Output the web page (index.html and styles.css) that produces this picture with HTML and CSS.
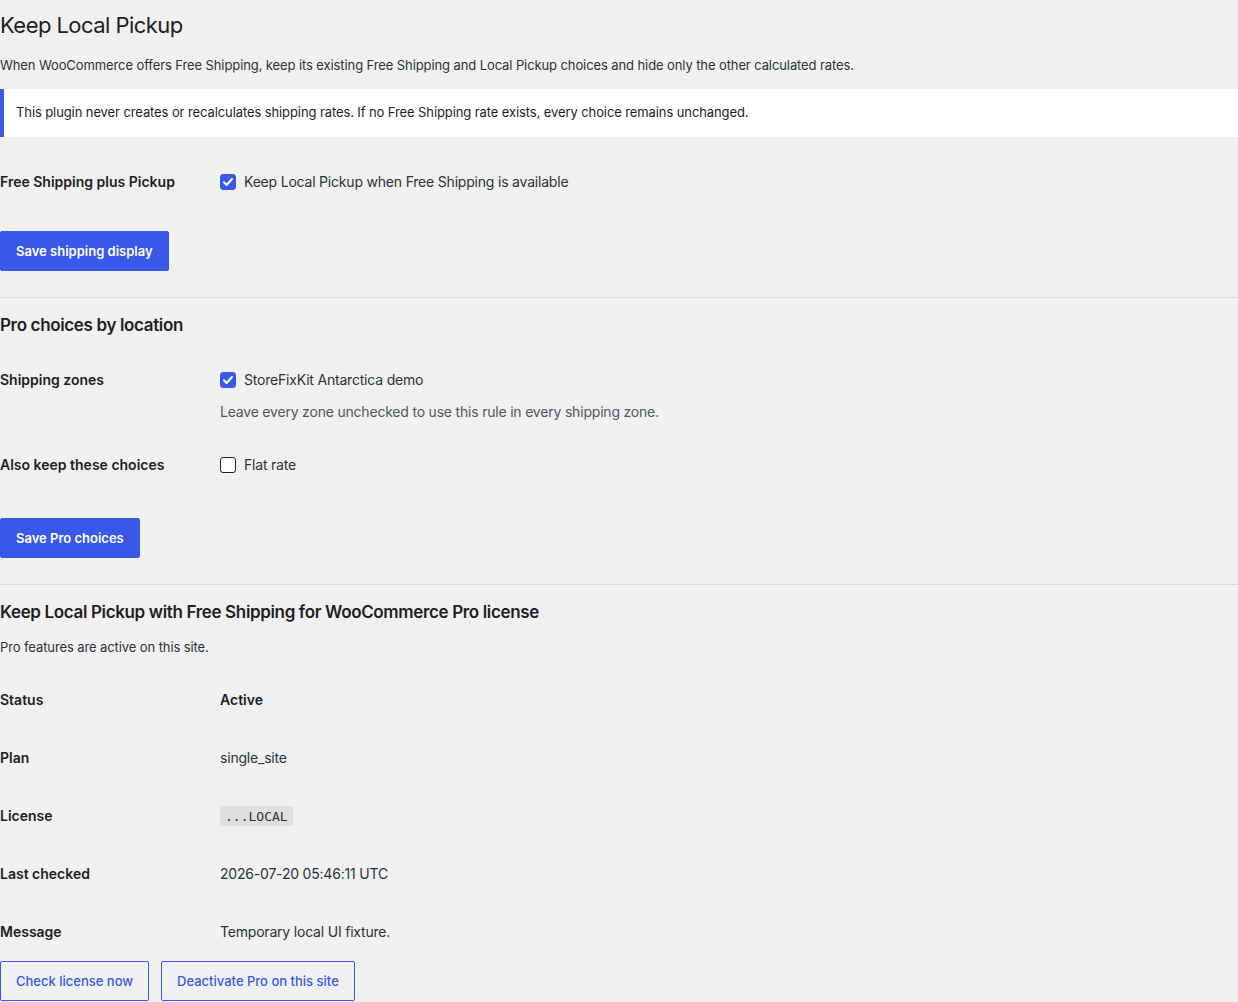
FILE: index.html
```html
<!DOCTYPE html>
<html lang="en">
<head>
<meta charset="utf-8">
<title>Keep Local Pickup</title>
<link rel="stylesheet" href="styles.css">
</head>
<body>
<div class="wrap">
  <h1 class="title">Keep Local Pickup</h1>
  <p class="lead">When WooCommerce offers Free Shipping, keep its existing Free Shipping and Local Pickup choices and hide only the other calculated rates.</p>
  <div class="notice"><p>This plugin never creates or recalculates shipping rates. If no Free Shipping rate exists, every choice remains unchanged.</p></div>

  <form class="section">
    <table class="form-table first">
      <tr>
        <th>Free Shipping plus Pickup</th>
        <td>
          <label class="check">
            <span class="cb on"><svg viewBox="0 0 16 16" width="16" height="16"><path d="M4 8.3l2.6 2.7L12 5" fill="none" stroke="#fff" stroke-width="2" stroke-linecap="round" stroke-linejoin="round"/></svg></span>
            <span>Keep Local Pickup when Free Shipping is available</span>
          </label>
        </td>
      </tr>
    </table>
    <div class="submit"><button type="button" class="btn primary">Save shipping display</button></div>
  </form>

  <hr class="sep">

  <form class="section">
    <h2 class="heading">Pro choices by location</h2>
    <table class="form-table">
      <tr>
        <th>Shipping zones</th>
        <td class="tight">
          <label class="check">
            <span class="cb on"><svg viewBox="0 0 16 16" width="16" height="16"><path d="M4 8.3l2.6 2.7L12 5" fill="none" stroke="#fff" stroke-width="2" stroke-linecap="round" stroke-linejoin="round"/></svg></span>
            <span>StoreFixKit Antarctica demo</span>
          </label>
          <p class="description">Leave every zone unchecked to use this rule in every shipping zone.</p>
        </td>
      </tr>
      <tr>
        <th>Also keep these choices</th>
        <td>
          <label class="check">
            <span class="cb"></span>
            <span>Flat rate</span>
          </label>
        </td>
      </tr>
    </table>
    <div class="submit wide"><button type="button" class="btn primary">Save Pro choices</button></div>
  </form>

  <hr class="sep">

  <section class="section">
    <h2 class="heading">Keep Local Pickup with Free Shipping for WooCommerce Pro license</h2>
    <p class="intro">Pro features are active on this site.</p>
    <table class="form-table info">
      <tr><th>Status</th><td><strong>Active</strong></td></tr>
      <tr><th>Plan</th><td>single_site</td></tr>
      <tr><th>License</th><td><code>...LOCAL</code></td></tr>
      <tr><th>Last checked</th><td>2026-07-20 05:46:11 UTC</td></tr>
      <tr><th>Message</th><td>Temporary local UI fixture.</td></tr>
    </table>
    <div class="actions">
      <button type="button" class="btn secondary">Check license now</button>
      <button type="button" class="btn secondary">Deactivate Pro on this site</button>
    </div>
  </section>
</div>
</body>
</html>
```

FILE: styles.css
```css
html, body {
  margin: 0;
  padding: 0;
  background: #f0f0f1;
}
body {
  font-family: Inter, "Noto Sans", "Liberation Sans", sans-serif;
  color: #1e1e1e;
  font-size: 13px;
  line-height: 1.4;
}
.wrap {
  width: 1238px;
}
.title {
  margin: 0;
  padding: 11px 0 3px;
  font-size: 22px;
  font-weight: 400;
  line-height: 1.3;
  color: #1e1e1e;
  letter-spacing: -0.55px;
}
.lead {
  margin: 13px 0 14px;
  font-size: 13px;
  line-height: 1.5;
  color: #2c3338;
  letter-spacing: -0.1px;
}
.notice {
  background: #fff;
  border-left: 4px solid #3858e9;
  padding: 1px 12px;
}
.notice p {
  margin: 13.25px 0;
  font-size: 13px;
  line-height: 1.5;
  color: #1e1e1e;
  letter-spacing: -0.1px;
}
.form-table {
  border-collapse: collapse;
  border-spacing: 0;
  width: 100%;
  font-size: 14px;
  line-height: 1.3;
}
.form-table.first {
  margin-top: 16px;
}
.form-table th {
  width: 200px;
  padding: 20px 10px 20px 0;
  text-align: left;
  vertical-align: top;
  font-weight: 600;
  color: #1e1e1e;
}
.form-table td {
  padding: 20px 10px 15px;
  vertical-align: top;
  color: #2c3338;
  letter-spacing: -0.2px;
}
.form-table td.tight {
  padding-bottom: 15px;
}
.form-table strong {
  font-weight: 600;
  color: #1e1e1e;
  letter-spacing: 0;
}
.check {
  display: flex;
  align-items: center;
  gap: 8px;
}
.cb {
  box-sizing: border-box;
  width: 16px;
  height: 16px;
  border: 1px solid #1e1e1e;
  border-radius: 3px;
  background: #fff;
  display: inline-flex;
  flex: none;
}
.cb.on {
  background: #3858e9;
  border-color: #3858e9;
}
.cb svg {
  display: block;
  margin: -1px;
}
.description {
  margin: 13px 0 0;
  color: #50575e;
  font-size: 14px;
  line-height: 1.3;
}
.submit {
  margin-top: 20px;
  margin-bottom: 26px;
}
.submit.wide {
  margin-top: 24px;
}
.btn {
  box-sizing: border-box;
  height: 40px;
  padding: 0 15px;
  border-radius: 2px;
  font-family: Inter, "Noto Sans", "Liberation Sans", sans-serif;
  font-size: 13px;
  font-weight: 600;
  cursor: pointer;
}
.btn.primary {
  background: #3858e9;
  border: 1px solid #3858e9;
  color: #fff;
}
.btn.secondary {
  background: transparent;
  border: 1px solid #3858e9;
  color: #3858e9;
  font-weight: 500;
}
.sep {
  margin: 0;
  border: 0;
  border-top: 1px solid #dcdcde;
  height: 0;
}
.heading {
  margin: 16px 0 0;
  font-size: 17px;
  font-weight: 600;
  line-height: 1.3;
  color: #1e1e1e;
  letter-spacing: -0.35px;
}
.heading + .form-table {
  margin-top: 15px;
}
.intro {
  margin: 15px 0 0;
  font-size: 13px;
  line-height: 1.5;
  color: #2c3338;
  letter-spacing: -0.1px;
}
.form-table.info {
  margin-top: 13px;
}
code {
  font-family: "DejaVu Sans Mono", "Liberation Mono", monospace;
  font-size: 13px;
  letter-spacing: 0;
  background: rgba(0, 0, 0, 0.07);
  padding: 3px 5px 2px;
  color: #2c3338;
}
.actions {
  display: flex;
  gap: 12px;
}
```
